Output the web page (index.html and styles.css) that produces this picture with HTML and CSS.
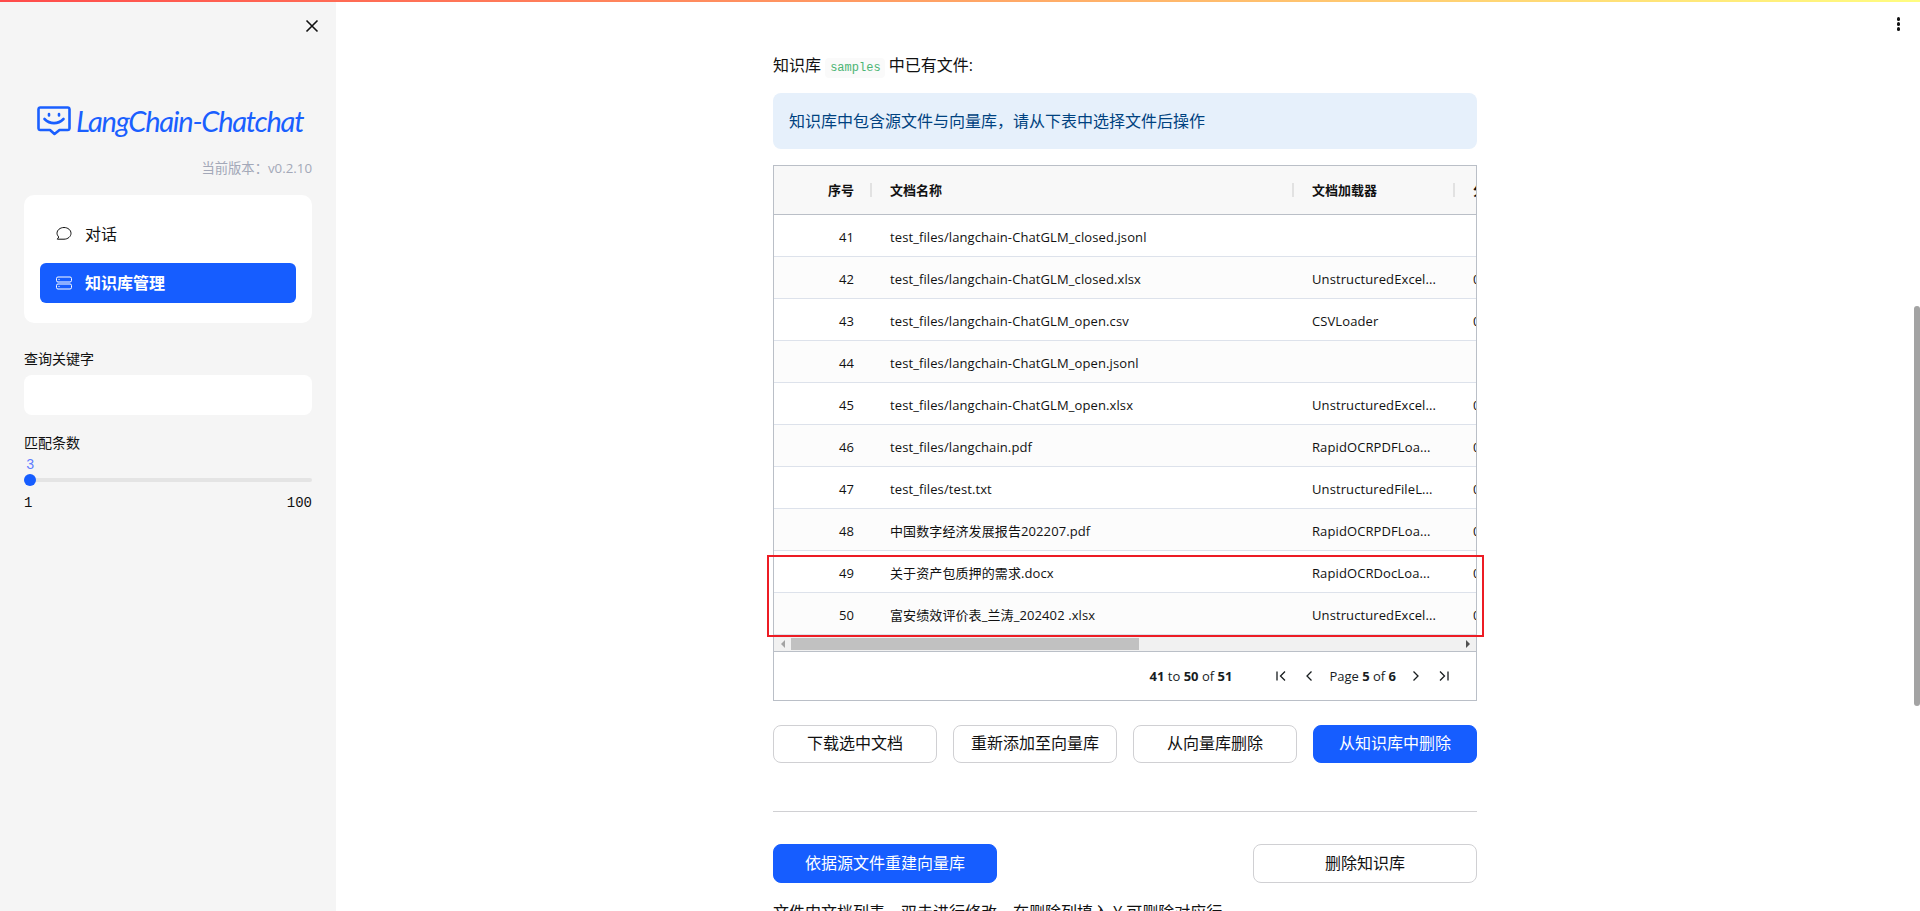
FILE: index.html
```html
<!DOCTYPE html>
<html lang="zh-CN">
<head>
  <meta charset="UTF-8" />
  <meta name="viewport" content="width=device-width, initial-scale=1.0"/>
  <title>LangChain-Chatchat</title>
  <link rel="stylesheet" href="styles.css">
</head>
<body>
  <div class="top-bar"></div>

  <div class="app">
    <aside class="sidebar">
      <div class="close-row">
        <svg class="close-icon" viewBox="0 0 14 14"><path d="M1.5 1.5 12.5 12.5M12.5 1.5 1.5 12.5" /></svg>
      </div>

      <div class="logo">
        <svg class="logo-icon" viewBox="0 0 34 30">
          <path d="M3 1.500h28a1.600 1.600 0 0 1 1.500 1.500v19.500a1.600 1.600 0 0 1-1.500 1.500h-8.500l-5 4-4.500-4H3a1.600 1.600 0 0 1-1.500-1.500V3A1.600 1.600 0 0 1 3 1.500z" />
          <path d="M7.500 13c5.500 5.500 13.500 5.500 19 0" />
          <path class="logo-eye" d="M12 8v1.500M22 8v1.500" />
        </svg>
        <span class="logo-text">LangChain-Chatchat</span>
      </div>
      <div class="version">当前版本：v0.2.10</div>

      <nav class="menu">
        <a class="menu-item">
          <svg class="menu-icon" viewBox="0 0 16 16"><path d="M8 1.500c3.900 0 7 2.600 7 5.800s-3.100 5.900-7 5.900H1.300l1.500-2.200C1.700 9.800 1 8.600 1 7.300 1 4.100 4.100 1.500 8 1.500z" /></svg>
          对话
        </a>
        <a class="menu-item active">
          <svg class="menu-icon" viewBox="0 0 16 16"><rect x="0.5" y="2" width="15" height="5" rx="1.500" /><rect x="0.500" y="9" width="15" height="5" rx="1.500" /><path d="M2.500 4.500h1M2.500 11.500h1" /></svg>
          知识库管理
        </a>
      </nav>

      <label class="field-label">查询关键字</label>
      <div class="text-input"></div>

      <label class="field-label count-label">匹配条数</label>
      <div class="slider-value">3</div>
      <div class="slider"><span class="slider-thumb"></span></div>
      <div class="slider-range"><span>1</span><span>100</span></div>
    </aside>

    <main class="main">
      <button class="kebab" aria-label="menu"><i></i><i></i><i></i></button>

      <div class="content">
        <p class="intro">知识库 <code>samples</code> 中已有文件:</p>
        <div class="alert">知识库中包含源文件与向量库，请从下表中选择文件后操作</div>

        <div class="grid">
          <div class="grid-header row-cols">
            <div class="cell num">序号<i class="sep"></i></div>
            <div class="cell">文档名称<i class="sep"></i></div>
            <div class="cell">文档加载器<i class="sep"></i></div>
            <div class="cell">分</div>
          </div>

          <div class="grid-row row-cols"><div class="cell num">41</div><div class="cell">test_files/langchain-ChatGLM_closed.jsonl</div><div class="cell"></div><div class="cell"></div></div>
          <div class="grid-row row-cols"><div class="cell num">42</div><div class="cell">test_files/langchain-ChatGLM_closed.xlsx</div><div class="cell">UnstructuredExcel...</div><div class="cell">0</div></div>
          <div class="grid-row row-cols"><div class="cell num">43</div><div class="cell">test_files/langchain-ChatGLM_open.csv</div><div class="cell">CSVLoader</div><div class="cell">0</div></div>
          <div class="grid-row row-cols"><div class="cell num">44</div><div class="cell">test_files/langchain-ChatGLM_open.jsonl</div><div class="cell"></div><div class="cell"></div></div>
          <div class="grid-row row-cols"><div class="cell num">45</div><div class="cell">test_files/langchain-ChatGLM_open.xlsx</div><div class="cell">UnstructuredExcel...</div><div class="cell">0</div></div>
          <div class="grid-row row-cols"><div class="cell num">46</div><div class="cell">test_files/langchain.pdf</div><div class="cell">RapidOCRPDFLoa...</div><div class="cell">0</div></div>
          <div class="grid-row row-cols"><div class="cell num">47</div><div class="cell">test_files/test.txt</div><div class="cell">UnstructuredFileL...</div><div class="cell">0</div></div>
          <div class="grid-row row-cols"><div class="cell num">48</div><div class="cell">中国数字经济发展报告202207.pdf</div><div class="cell">RapidOCRPDFLoa...</div><div class="cell">0</div></div>
          <div class="grid-row row-cols"><div class="cell num">49</div><div class="cell">关于资产包质押的需求.docx</div><div class="cell">RapidOCRDocLoa...</div><div class="cell">0</div></div>
          <div class="grid-row row-cols"><div class="cell num">50</div><div class="cell">富安绩效评价表_兰涛_202402 .xlsx</div><div class="cell">UnstructuredExcel...</div><div class="cell">0</div></div>

          <div class="grid-hscroll">
            <span class="arrow arrow-left"></span>
            <div class="hscroll-track"><span class="hscroll-thumb"></span></div>
            <span class="arrow arrow-right"></span>
          </div>

          <div class="grid-footer">
            <span class="page-count"><b>41</b> to <b>50</b> of <b>51</b></span>
            <div class="pager">
              <svg class="page-first" viewBox="0 0 12 12"><path d="M2 1.500v9M10 1.500 5.500 6l4.500 4.500" /></svg>
              <svg viewBox="0 0 12 12"><path d="M8.500 1.500 4 6l4.500 4.500" /></svg>
              <span class="page-label">Page <b>5</b> of <b>6</b></span>
              <svg viewBox="0 0 12 12"><path d="M3.500 1.500 8 6l-4.500 4.500" /></svg>
              <svg class="page-last" viewBox="0 0 12 12"><path d="M10 1.500v9M2 1.500 6.500 6 2 10.500" /></svg>
            </div>
          </div>

          <div class="annotation"></div>
        </div>

        <div class="actions actions-four">
          <button class="btn">下载选中文档</button>
          <button class="btn">重新添加至向量库</button>
          <button class="btn">从向量库删除</button>
          <button class="btn primary">从知识库中删除</button>
        </div>

        <hr class="divider" />

        <div class="actions actions-three">
          <button class="btn primary">依据源文件重建向量库</button>
          <span></span>
          <button class="btn">删除知识库</button>
        </div>

        <p class="note">文件内文档列表。双击进行修改，在删除列填入 Y 可删除对应行。</p>
      </div>
    </main>

    <div class="page-scroll"><span class="page-scroll-thumb"></span></div>
  </div>
</body>
</html>
```

FILE: styles.css
```css
* {
  box-sizing: border-box;
}

html, body {
  height: 100%;
  overflow: hidden;
}

body {
  margin: 0;
  background: #fff;
  color: #111;
  font: 16px/1.6 "Open Sans", "Noto Sans CJK SC", sans-serif;
}

.top-bar {
  height: 2px;
  background: linear-gradient(90deg, #ff4b4b, #fffd80);
}

.app {
  display: flex;
  height: 909px;
}

/* Sidebar */
.sidebar {
  flex: 0 0 336px;
  min-width: 0;
  padding: 0 24px;
  background: #f5f5f5;
}

.close-row {
  display: flex;
  justify-content: flex-end;
  padding-top: 17px;
  height: 103px;
}

.close-icon {
  width: 14px;
  height: 14px;
  margin-right: -7px;
}

.close-icon path {
  fill: none;
  stroke: #111;
  stroke-width: 1.600;
}

.logo {
  display: flex;
  align-items: center;
  gap: 5px;
  height: 32px;
  padding-left: 13px;
  color: #1a5fff;
}

.logo-icon {
  flex: none;
  width: 34px;
  height: 30px;
}

.logo-icon path {
  fill: none;
  stroke: #1a5fff;
  stroke-width: 2.600;
  stroke-linecap: round;
  stroke-linejoin: round;
}

.logo-text {
  font: italic 400 29px/32px Lato, sans-serif;
  letter-spacing: -1.250px;
  white-space: nowrap;
}

.version {
  margin-top: 21px;
  font-size: 13.300px;
  line-height: 20px;
  text-align: right;
  color: #a3a8b8;
}

.menu {
  margin-top: 17px;
  padding: 19px 16px 20px;
  background: #fff;
  border-radius: 10px;
}

.menu-item {
  display: flex;
  align-items: center;
  gap: 13px;
  height: 40px;
  padding: 2px 0 0 16px;
  border-radius: 6px;
  color: #111;
}

.menu-item + .menu-item {
  margin-top: 9px;
}

.menu-item.active {
  background: #165dff;
  color: #fff;
  font-weight: 700;
}

.menu-icon {
  flex: none;
  width: 16px;
  height: 16px;
  margin-top: -2px;
}

.menu-icon path, .menu-icon rect {
  fill: none;
  stroke: currentColor;
  stroke-width: 1;
}

.field-label {
  display: block;
  margin-top: 25px;
  font-size: 14px;
  line-height: 22px;
}

.count-label {
  margin-top: 17px;
}

.text-input {
  height: 40px;
  margin-top: 5px;
  background: #fff;
  border-radius: 8px;
}

.slider-value {
  margin-top: 1px;
  padding-left: 2px;
  font: 14px/20px "Liberation Mono", monospace;
  color: #5f7dff;
}

.slider {
  position: relative;
  height: 4px;
  margin-top: 3px;
  background: #e4e4e4;
  border-radius: 2px;
}

.slider-thumb {
  position: absolute;
  left: 0;
  top: -4px;
  width: 12px;
  height: 12px;
  border-radius: 50%;
  background: #165dff;
}

.slider-range {
  display: flex;
  justify-content: space-between;
  margin-top: 11px;
  font: 14px/20px "Liberation Mono", monospace;
}

/* Main area */
.main {
  position: relative;
  flex: 1;
  min-width: 0;
  overflow: hidden;
}

.kebab {
  position: absolute;
  top: 15px;
  right: 14px;
  display: flex;
  flex-direction: column;
  gap: 1.500px;
  padding: 0;
  border: 0;
  background: none;
}

.kebab i {
  width: 3.500px;
  height: 3.500px;
  border-radius: 50%;
  background: #111;
}

.content {
  width: 704px;
  margin: 0 auto;
  padding-top: 50px;
}

.intro {
  margin: 0;
  line-height: 26px;
}

code {
  padding: 3px 4px 3px 5px;
  border-radius: 4px;
  background: #fafafa;
  color: #4cb574;
  font: 12px "Liberation Mono", monospace;
}

.alert {
  height: 56px;
  margin-top: 15px;
  padding: 16px;
  border-radius: 8px;
  background: #e6f0fb;
  color: #004280;
  line-height: 24px;
}

/* Data grid */
.grid {
  position: relative;
  height: 536px;
  margin-top: 16px;
  border: 1px solid #babfc7;
  font-size: 13px;
}

.row-cols {
  display: grid;
  grid-template-columns: 98px 422px 161px 21px;
}

.grid-header {
  height: 49px;
  background: #f8f8f8;
  border-bottom: 1px solid #babfc7;
  font-weight: 700;
}

.cell {
  position: relative;
  display: flex;
  align-items: center;
  min-width: 0;
  padding: 0 18px;
  white-space: nowrap;
  overflow: hidden;
}

/* last column runs past the grid's right edge, so only its first pixels show */
.cell:last-child {
  padding-right: 0;
}

.grid-row .cell {
  padding-top: 3px;
  letter-spacing: 0.100px;
}

.cell.num {
  justify-content: flex-end;
}

.sep {
  position: absolute;
  top: 17px;
  right: 0;
  width: 2px;
  height: 14px;
  background: #e2e2e2;
}

.grid-row {
  height: 42px;
  border-bottom: 1px solid #dde2eb;
}

.grid-row:nth-of-type(odd) {
  background: #fcfcfc;
}

.grid-hscroll {
  display: flex;
  align-items: center;
  height: 17px;
  padding-top: 2px;
  background: #f1f1f1;
  border-bottom: 1px solid #babfc7;
}

.arrow {
  flex: none;
  width: 0;
  height: 0;
  margin: 0 6px 0 7px;
  border: 4px solid transparent;
}

.arrow-left {
  border-left-width: 0;
  border-right-color: #a3a3a3;
}

.arrow-right {
  border-right-width: 0;
  border-left-color: #505050;
}

.hscroll-track {
  flex: 1;
  height: 12px;
}

.hscroll-thumb {
  display: block;
  width: 348px;
  height: 100%;
  background: #c1c1c1;
}

.grid-footer {
  display: flex;
  align-items: center;
  justify-content: flex-end;
  height: 47px;
  padding: 2px 26px 0 0;
  color: #181d1f;
}

.page-count {
  margin-right: 43px;
}

.pager {
  display: flex;
  align-items: center;
  gap: 14px;
}

.pager svg {
  width: 12px;
  height: 12px;
}

.pager .page-first {
  margin-right: 2px;
}

.pager .page-last {
  margin-left: 2px;
}

.pager path {
  fill: none;
  stroke: #181d1f;
  stroke-width: 1.300;
}

/* red box drawn over rows 49 and 50 */
.annotation {
  position: absolute;
  left: -7px;
  top: 389px;
  width: 717px;
  height: 82px;
  border: 2px solid #ed1c24;
  pointer-events: none;
}

/* Buttons */
.actions {
  display: grid;
  gap: 16px;
}

.actions-four {
  grid-template-columns: repeat(4, 1fr);
  margin-top: 24px;
}

.actions-three {
  grid-template-columns: repeat(3, 1fr);
}

.btn {
  height: 38px;
  padding: 0;
  border: 1px solid #d0d0d3;
  border-radius: 8px;
  background: #fff;
  color: #111;
  font: inherit;
}

.btn.primary {
  border-color: #165dff;
  background: #165dff;
  color: #fff;
}

.actions-three .btn {
  height: 39px;
}

.divider {
  height: 1px;
  margin: 48px 0 32px;
  border: 0;
  background: #d0d0d3;
}

.note {
  margin: 17px 0 0;
  line-height: 24px;
  white-space: nowrap;
}

/* Page scrollbar */
.page-scroll {
  flex: 0 0 6px;
}

.page-scroll-thumb {
  display: block;
  width: 100%;
  height: 400px;
  margin-top: 304px;
  background: #a3a3a3;
  border-radius: 3px;
}
```
